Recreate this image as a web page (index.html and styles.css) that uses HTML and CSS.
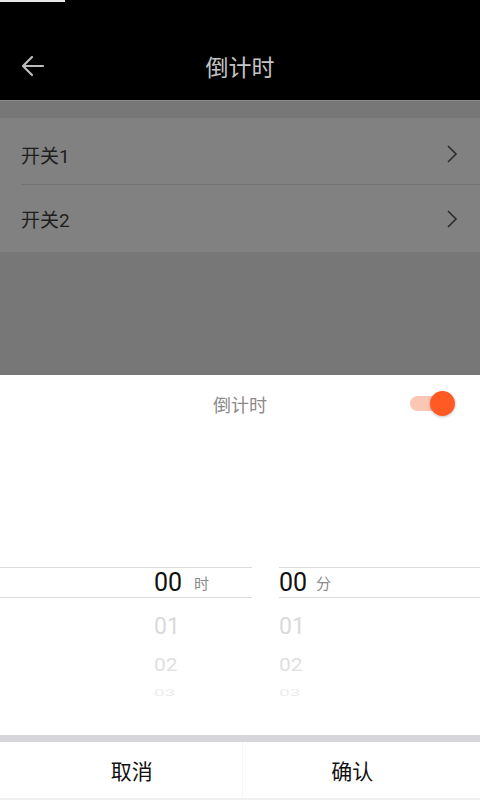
FILE: index.html
```html
<!DOCTYPE html>
<html lang="zh-CN">
<head>
  <meta charset="UTF-8" />
  <title>倒计时</title>
  <meta name="viewport" content="width=device-width, initial-scale=1.0" />
  <link rel="stylesheet" href="styles.css">
</head>
<body>
  <div class="screen">
    <header class="topbar">
      <div class="status-mark"></div>
      <div class="nav">
        <svg class="back" width="24" height="22" viewBox="0 0 24 22">
          <path d="M22 11H3M11 2L2 11l9 9" fill="none" stroke="#bdbdbd" stroke-width="2.2" stroke-linecap="round" stroke-linejoin="round"/>
        </svg>
        <h1>倒计时</h1>
      </div>
    </header>

    <!-- list, dimmed by the sheet mask -->
    <div class="dimmed">
      <ul class="switch-list">
        <li class="row">
          <span>开关1</span>
          <svg width="12" height="20" viewBox="0 0 12 20"><path d="M2 2l8 8-8 8" fill="none" stroke="#2b2b2b" stroke-width="1.6"/></svg>
        </li>
        <li class="row">
          <span>开关2</span>
          <svg width="12" height="20" viewBox="0 0 12 20"><path d="M2 2l8 8-8 8" fill="none" stroke="#2b2b2b" stroke-width="1.6"/></svg>
        </li>
      </ul>
    </div>

    <!-- Bottom sheet -->
    <div class="sheet">
      <div class="sheet-head">
        <span class="sheet-title">倒计时</span>
        <div class="toggle on"><span class="knob"></span></div>
      </div>

      <div class="picker">
        <div class="wheel wheel-left">
          <div class="selected"><b>00</b><i>时</i></div>
          <div class="item i1">01</div>
          <div class="item i2">02</div>
          <div class="item i3">03</div>
        </div>
        <div class="wheel wheel-right">
          <div class="selected"><b>00</b><i>分</i></div>
          <div class="item i1">01</div>
          <div class="item i2">02</div>
          <div class="item i3">03</div>
        </div>
      </div>

      <div class="actions">
        <button class="btn cancel">取消</button>
        <button class="btn confirm">确认</button>
      </div>
    </div>
  </div>
</body>
</html>
```

FILE: styles.css
```css
* {
  box-sizing: border-box;
}

body {
  margin: 0;
  background: #fff;
  font-family: Roboto, "Noto Sans CJK SC", sans-serif;
}

.screen {
  width: 480px;
  height: 800px;
  display: flex;
  flex-direction: column;
  overflow: hidden;
}

/* Top bar */
.topbar {
  height: 100px;
  background: #000;
  display: flex;
  flex-direction: column;
}

.status-mark {
  width: 65px;
  height: 2px;
  background: #e8e8e8;
}

.nav {
  margin-top: 38px;
  height: 52px;
  display: flex;
  align-items: center;
  position: relative;
  padding-left: 21px;
}

.nav h1 {
  position: absolute;
  left: 0;
  right: 0;
  margin: 0;
  text-align: center;
  font-size: 23px;
  font-weight: normal;
  color: #c4c4c4;
  pointer-events: none;
}

/* Dimmed list */
.dimmed {
  height: 275px;
  background: #777;
  border-top: 1px solid #8a8a8a;
}

.switch-list {
  list-style: none;
  margin: 17px 0 0;
  padding: 0 0 0 21px;
  background: #818181;
}

.row {
  height: 67px;
  display: flex;
  align-items: center;
  justify-content: space-between;
  padding-right: 22px;
  font-size: 19px;
  color: #1e1e1e;
}

.row:first-child {
  border-bottom: 1px solid #737373;
  padding-top: 6px;
}

/* Bottom sheet */
.sheet {
  flex: 1;
  background: #fff;
  display: flex;
  flex-direction: column;
}

.sheet-head {
  height: 57px;
  display: flex;
  align-items: center;
  justify-content: center;
  position: relative;
}

.sheet-title {
  font-size: 18px;
  color: #8a8a8a;
}

.toggle {
  position: absolute;
  right: 35px;
  top: 21px;
  width: 35px;
  height: 15px;
  border-radius: 8px;
  background: #fcc6b4;
}

.toggle .knob {
  position: absolute;
  right: -10px;
  top: -5px;
  width: 25px;
  height: 25px;
  border-radius: 50%;
  background: #ff5a24;
  box-shadow: 0 1px 3px rgba(0,0,0,0.25);
}

/* Picker wheels */
.picker {
  height: 303px;
  display: flex;
  gap: 27px;
  padding-top: 135px;
}

.wheel {
  display: flex;
  flex-direction: column;
}

.wheel-left {
  width: 252px;
}

.wheel-right {
  flex: 1;
}

.selected {
  height: 31px;
  border-top: 1.5px solid #dcdcdc;
  border-bottom: 1.5px solid #dcdcdc;
  display: flex;
  align-items: center;
  gap: 12px;
}

.wheel-left .selected,
.wheel-left .item {
  padding-left: 154px;
}

.selected b {
  font-weight: normal;
  font-size: 25px;
  color: #111;
}

.selected i {
  font-style: normal;
  font-size: 15px;
  color: #8a8a8a;
}

.wheel-right .selected {
  gap: 9px;
}

.item {
  font-size: 23px;
  color: #dadada;
  display: flex;
  align-items: center;
}

.i1 {
  height: 55px;
  padding-top: 2px;
}

.i2 {
  height: 24px;
  font-size: 21px;
  color: #e0e0e0;
  transform: scaleY(0.85);
}

.i3 {
  height: 30px;
  font-size: 19px;
  color: #ececec;
  transform: scaleY(0.5);
}

/* Action buttons */
.actions {
  flex: 1;
  display: flex;
  border-top: 7px solid #d6d6db;
  border-bottom: 2px solid #f0f0f0;
}

.btn {
  flex: 1;
  border: none;
  background: #fff;
  font-family: inherit;
  font-size: 21px;
  color: #111;
  padding: 0;
}

.btn.cancel {
  padding-left: 22px;
  border-right: 1px solid #f6f6f6;
}

.btn.confirm {
  padding-right: 18px;
}
```
